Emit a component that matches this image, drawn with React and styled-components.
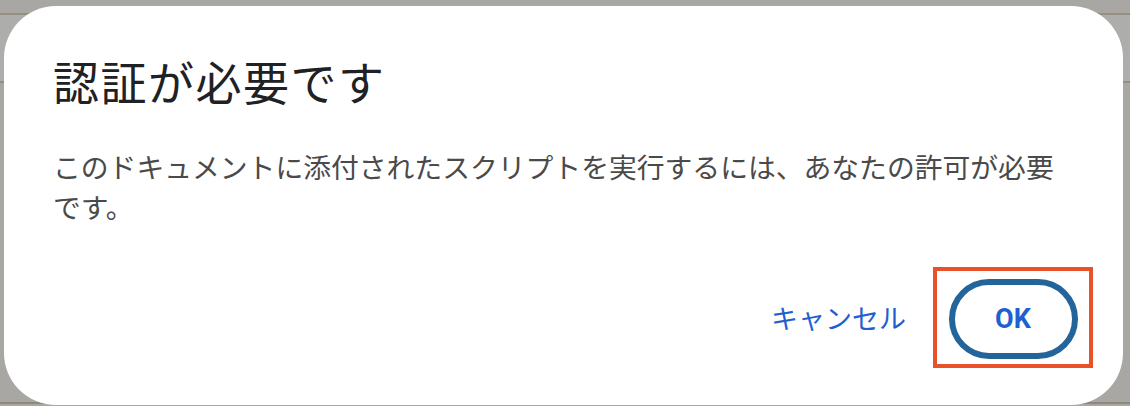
import styled, { createGlobalStyle } from "styled-components";

const GlobalStyle = createGlobalStyle`
  html, body {
    margin: 0;
    padding: 0;
  }
  body {
    width: 1130px;
    height: 406px;
    overflow: hidden;
    /* dimmed page behind the dialog */
    background:
      linear-gradient(to bottom,
        transparent 0 13px,
        #968f80 13px 15px,
        #adadac 15px 81px,
        #968f80 81px 83px,
        transparent 83px 402px,
        #8d8a7c 402px 404px,
        transparent 404px),
      #a8a7a3;
    font-family: "Noto Sans CJK JP", "Noto Sans", sans-serif;
  }
`;

const Backdrop = styled.div`
  padding: 6px 7px 0 4px;
`;

const Dialog = styled.div`
  box-sizing: border-box;
  width: 1119px;
  height: 399px;
  background: #ffffff;
  border-radius: 52px;
  padding: 46px 30px 37px 49px;
  display: flex;
  flex-direction: column;
`;

const Title = styled.h2`
  margin: 0;
  font-size: 46px;
  line-height: 56px;
  font-weight: 400;
  color: #202124;
  letter-spacing: 1.5px;
`;

const Message = styled.p`
  margin: 38px 0 0;
  width: 1020px;
  font-size: 27.8px;
  line-height: 40px;
  color: #4a4a4a;
`;

const Footer = styled.div`
  margin-top: auto;
  display: flex;
  justify-content: flex-end;
  align-items: center;
  gap: 27px;
`;

const TextButton = styled.button`
  border: none;
  background: none;
  padding: 0;
  font-family: inherit;
  font-size: 27px;
  color: #1f5fcf;
  cursor: pointer;
`;

const Highlight = styled.div`
  box-sizing: border-box;
  width: 160px;
  height: 101px;
  border: 4px solid #e9512b;
  display: flex;
  align-items: center;
  justify-content: center;
  padding-top: 3px;
`;

const PillButton = styled.button`
  box-sizing: border-box;
  width: 129px;
  height: 80px;
  border: 6px solid #23649a;
  border-radius: 40px;
  background: #ffffff;
  font-family: "Roboto", "Noto Sans", sans-serif;
  font-weight: 700;
  font-size: 27px;
  color: #1f5fcf;
  cursor: pointer;
`;

export default function App() {
  return (
    <>
      <GlobalStyle />
      <Backdrop>
        <Dialog role="dialog">
          <Title>認証が必要です</Title>
          <Message>
            このドキュメントに添付されたスクリプトを実行するには、あなたの許可が必要です。
          </Message>
          <Footer>
            <TextButton>キャンセル</TextButton>
            <Highlight>
              <PillButton>OK</PillButton>
            </Highlight>
          </Footer>
        </Dialog>
      </Backdrop>
    </>
  );
}
